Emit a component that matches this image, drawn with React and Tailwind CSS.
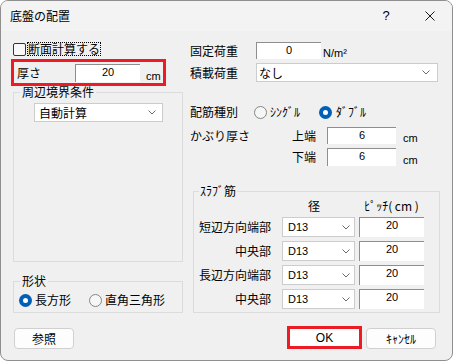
import React from 'react';

function Chevron() {
    return (
        <svg width="8" height="5" viewBox="0 0 8 5" className="shrink-0">
            <polyline points="0.5,0.5 4,4 7.5,0.5" fill="none" stroke="#6b6b6b" strokeWidth="1" />
        </svg>
    );
}

function Select({ value, className, padL = 'pl-[4px]', padR = 'pr-[5px]' }) {
    return (
        <div className={`bg-white border border-[#cccccc] flex items-center justify-between ${padL} ${padR} ${className}`}>
            <span className="leading-[14px]">{value}</span>
            <Chevron />
        </div>
    );
}

function Field({ value, className }) {
    return (
        <div className={`bg-white border-t border-l border-[#8e8e8e] flex justify-center pt-[1px] font-['Liberation_Sans','Noto_Sans_CJK_JP',sans-serif] text-[11px] leading-[12px] ${className}`}>
            {value}
        </div>
    );
}

function Radio({ checked }) {
    if (checked) {
        return (
            <span className="w-[13px] h-[13px] rounded-full bg-[#005fb8] flex items-center justify-center shrink-0">
                <span className="w-[5px] h-[5px] rounded-full bg-white" />
            </span>
        );
    }
    return <span className="block w-[13px] h-[13px] rounded-full border border-[#858585] bg-[#f6f6f6] shrink-0" />;
}

const slabRows = [
    { label: '短辺方向端部' },
    { label: '中央部' },
    { label: '長辺方向端部' },
    { label: '中央部' },
];

export default function App() {
    return (
        <div className="w-[454px] h-[362px] bg-white text-black text-[12px] leading-[14px] font-['Noto_Sans_CJK_JP',sans-serif]">
            <div className="w-[453px] h-[361px] rounded-[8px] border border-[#8f8f8f] overflow-hidden flex flex-col bg-[#f0f0f0]">
                {/* title bar */}
                <div className="h-[30px] shrink-0 bg-[#f3f3f3] flex items-center pl-[9px]">
                    <span className="text-[12px]">底盤の配置</span>
                    <div className="flex-1" />
                    <div className="w-[44px] flex justify-center text-[13px] font-['Liberation_Sans',sans-serif]">?</div>
                    <div className="w-[44px] flex justify-center">
                        <svg width="10" height="10" viewBox="0 0 10 10">
                            <path d="M0.5 0.5 L9.5 9.5 M9.5 0.5 L0.5 9.5" stroke="#1a1a1a" strokeWidth="1" />
                        </svg>
                    </div>
                </div>

                {/* body */}
                <div className="flex h-[295px] shrink-0">
                    {/* left column */}
                    <div className="w-[183px] pl-[10px] flex flex-col">
                        <div className="mt-[11px] h-[14px] ml-[2px] flex items-center">
                            <span className="w-[13px] h-[13px] rounded-[2px] border border-[#333333] bg-[#f8f8f8]" />
                            <span className="ml-[1px] border border-dotted border-black leading-[12px]">断面計算する</span>
                        </div>

                        <div className="mt-[3px] w-[155px] h-[27px] border-[3px] border-[#ed1c24] flex items-center pl-[3px]">
                            <span className="w-[58px]">厚さ</span>
                            <Field value="20" className="w-[65px] h-[18px]" />
                            <span className="ml-[6px] mt-[7px] font-['Liberation_Sans',sans-serif] text-[11px]">cm</span>
                        </div>

                        <fieldset className="ml-[2px] w-[170px] h-[176px] border border-[#dcdcdc]">
                            <legend className="ml-[6px] px-[2px] leading-[12px]">周辺境界条件</legend>
                            <Select value="自動計算" className="ml-[20px] mt-[5px] w-[129px] h-[19px]" padR="pr-[6px]" />
                        </fieldset>

                        <fieldset className="mt-[13px] ml-[2px] w-[170px] h-[38px] border border-[#dcdcdc]">
                            <legend className="ml-[6px] px-[2px] leading-[12px]">形状</legend>
                            <div className="mt-[6px] h-[14px] ml-[5px] flex items-center">
                                <Radio checked />
                                <span className="ml-[3px]">長方形</span>
                                <span className="ml-[18px] flex items-center"><Radio /></span>
                                <span className="ml-[3px]">直角三角形</span>
                            </div>
                        </fieldset>
                    </div>

                    {/* right column */}
                    <div className="pl-[6px] flex flex-col">
                        <div className="mt-[11px] h-[17px] flex items-center">
                            <span className="w-[66px]">固定荷重</span>
                            <Field value="0" className="w-[65px] h-[17px]" />
                            <span className="ml-[2px] mt-[5px] font-['Liberation_Sans',sans-serif] text-[11px]">N/m²</span>
                        </div>
                        <div className="mt-[4px] h-[19px] flex items-center">
                            <span className="w-[66px]">積載荷重</span>
                            <Select value="なし" className="w-[182px] h-[19px]" padL="pl-[2px]" padR="pr-[7px]" />
                        </div>

                        <div className="mt-[23px] h-[14px] flex items-center">
                            <span className="w-[64px]">配筋種別</span>
                            <span className="w-[65px] flex items-center">
                                <Radio />
                                <span className="ml-[3px]">ｼﾝｸﾞﾙ</span>
                            </span>
                            <Radio checked />
                            <span className="ml-[4px]">ﾀﾞﾌﾞﾙ</span>
                        </div>

                        <div className="mt-[8px] h-[17px] flex items-center">
                            <span className="w-[102px]">かぶり厚さ</span>
                            <span className="w-[35px]">上端</span>
                            <Field value="6" className="w-[69px] h-[17px]" />
                            <span className="ml-[7px] mt-[5px] font-['Liberation_Sans',sans-serif] text-[11px]">cm</span>
                        </div>
                        <div className="mt-[4px] h-[18px] flex items-center">
                            <span className="ml-[102px] w-[35px]">下端</span>
                            <Field value="6" className="w-[69px] h-[18px]" />
                            <span className="ml-[7px] mt-[6px] font-['Liberation_Sans',sans-serif] text-[11px]">cm</span>
                        </div>

                        <fieldset className="mt-[19px] ml-[3px] w-[247px] h-[128px] border border-[#dcdcdc]">
                            <legend className="ml-[5px] px-[1px] leading-[12px]">ｽﾗﾌﾞ筋</legend>
                            <div className="mt-[3px] h-[12px] flex items-center leading-[12px]">
                                <span className="w-[88px]" />
                                <span className="w-[73px] text-center pr-[9px]">径</span>
                                <span className="ml-[4px] w-[65px] text-center">ﾋﾟｯﾁ( cm )</span>
                            </div>
                            <div className="mt-[5px] flex flex-col gap-[4px]">
                                {slabRows.map((row, i) => (
                                    <div key={i} className="h-[20px] flex items-center">
                                        <span className="w-[77px] text-right">{row.label}</span>
                                        <Select value="D13" className="ml-[11px] w-[73px] h-[20px] font-['Liberation_Sans','Noto_Sans_CJK_JP',sans-serif] text-[11px]" padL="pl-[5px]" padR="pr-[4px]" />
                                        <Field value="20" className="ml-[4px] w-[65px] h-[20px]" />
                                    </div>
                                ))}
                            </div>
                        </fieldset>
                    </div>
                </div>

                {/* buttons */}
                <div className="h-[23px] flex items-end">
                    <div className="ml-[13px] w-[60px] h-[21px] bg-[#fdfdfd] border border-[#d0d0d0] rounded-[4px] flex items-center justify-center">参照</div>
                    <div className="ml-[213px] w-[75px] h-[23px] border-[3px] border-[#ed1c24] bg-white flex items-center justify-center font-['Liberation_Sans',sans-serif]">OK</div>
                    <div className="ml-[4px] w-[70px] h-[21px] bg-[#fdfdfd] border border-[#d0d0d0] rounded-[4px] flex items-center justify-center">ｷｬﾝｾﾙ</div>
                </div>
            </div>
        </div>
    );
}
